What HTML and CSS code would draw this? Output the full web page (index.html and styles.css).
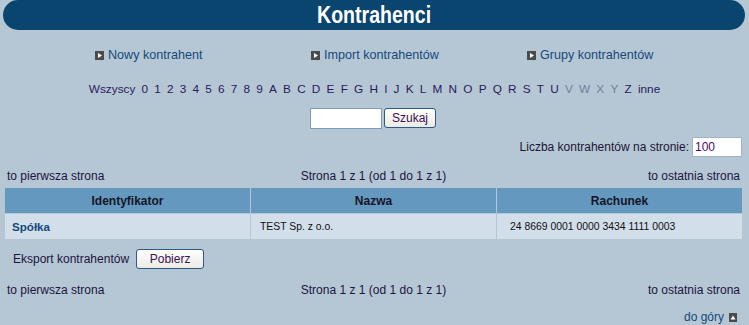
FILE: index.html
```html
<!DOCTYPE html>
<html lang="pl">
<head>
<meta charset="utf-8">
<title>Kontrahenci</title>
<link rel="stylesheet" href="styles.css">
</head>
<body>
<div class="page">
  <h1 class="title"><span class="title-text">Kontrahenci</span></h1>

  <nav class="actions">
    <a class="action" href="#"><svg class="arrow" width="9" height="9" viewBox="0 0 9 9"><rect width="9" height="9" fill="#4b4b4b"/><path d="M3 2 L7 4.5 L3 7 Z" fill="#fff"/></svg>Nowy kontrahent</a>
    <a class="action" href="#"><svg class="arrow" width="9" height="9" viewBox="0 0 9 9"><rect width="9" height="9" fill="#4b4b4b"/><path d="M3 2 L7 4.5 L3 7 Z" fill="#fff"/></svg>Import kontrahentów</a>
    <a class="action" href="#"><svg class="arrow" width="9" height="9" viewBox="0 0 9 9"><rect width="9" height="9" fill="#4b4b4b"/><path d="M3 2 L7 4.5 L3 7 Z" fill="#fff"/></svg>Grupy kontrahentów</a>
  </nav>

  <div class="letters">
    <a href="#">Wszyscy</a><a href="#">0</a><a href="#">1</a><a href="#">2</a><a href="#">3</a><a href="#">4</a><a href="#">5</a><a href="#">6</a><a href="#">7</a><a href="#">8</a><a href="#">9</a><a href="#">A</a><a href="#">B</a><a href="#">C</a><a href="#">D</a><a href="#">E</a><a href="#">F</a><a href="#">G</a><a href="#">H</a><a href="#">I</a><a href="#">J</a><a href="#">K</a><a href="#">L</a><a href="#">M</a><a href="#">N</a><a href="#">O</a><a href="#">P</a><a href="#">Q</a><a href="#">R</a><a href="#">S</a><a href="#">T</a><a href="#">U</a><span class="off">V</span><span class="off">W</span><span class="off">X</span><span class="off">Y</span><a href="#">Z</a><a href="#">inne</a>
  </div>

  <form class="search">
    <input class="search-input" type="text">
    <button class="btn btn-search" type="button">Szukaj</button>
  </form>

  <div class="perpage">
    <label class="perpage-label">Liczba kontrahentów na stronie:</label>
    <input class="perpage-input" type="text" value="100">
  </div>

  <div class="pager">
    <span class="pager-first">to pierwsza strona</span>
    <span class="pager-info">Strona 1 z 1 (od 1 do 1 z 1)</span>
    <span class="pager-last">to ostatnia strona</span>
  </div>

  <table class="grid">
    <thead>
      <tr><th>Identyfikator</th><th>Nazwa</th><th>Rachunek</th></tr>
    </thead>
    <tbody>
      <tr>
        <td class="cell-id"><a href="#">Spółka</a></td>
        <td class="cell-name">TEST Sp. z o.o.</td>
        <td class="cell-acc">24 8669 0001 0000 3434 1111 0003</td>
      </tr>
    </tbody>
  </table>

  <div class="export">
    <span class="export-label">Eksport kontrahentów</span>
    <button class="btn btn-export" type="button">Pobierz</button>
  </div>

  <div class="pager pager-bottom">
    <span class="pager-first">to pierwsza strona</span>
    <span class="pager-info">Strona 1 z 1 (od 1 do 1 z 1)</span>
    <span class="pager-last">to ostatnia strona</span>
  </div>

  <div class="totop">
    <a href="#">do góry</a><svg class="up" width="8" height="9" viewBox="0 0 8 9"><rect width="8" height="9" fill="#4b4b4b"/><path d="M1.5 6.5 L4 2.5 L6.5 6.5 Z" fill="#fff"/></svg>
  </div>
</div>
</body>
</html>
```

FILE: styles.css
```css
html, body {
  margin: 0;
  padding: 0;
  background: #b5c7d5;
}

body {
  font-family: "Liberation Sans", Arial, sans-serif;
  font-size: 12px;
  color: #1e1440;
}

a {
  text-decoration: none;
}

.page {
  width: 749px;
}

.title {
  margin: 0 4px 0 3px;
  height: 30px;
  border-radius: 15px;
  background: #09456e;
  color: #fff;
  font-family: "Liberation Sans", Arial, sans-serif;
  font-weight: bold;
  font-size: 23px;
  line-height: 30px;
  text-align: center;
}

.title-text {
  display: inline-block;
  transform: scaleX(0.85);
}

.actions {
  display: flex;
  margin-top: 18px;
  padding-left: 95px;
  height: 14px;
  line-height: 14px;
}

.action {
  flex: 0 0 216px;
  display: flex;
  align-items: center;
  color: #16497a;
  font-size: 12.6px;
}

.arrow {
  margin-right: 4px;
  flex: none;
}

.letters {
  display: flex;
  justify-content: center;
  gap: 6.2px;
  margin-top: 20px;
  height: 14px;
  line-height: 14px;
  font-size: 11.8px;
}

.letters a {
  color: #2a1a5c;
}

.letters .off {
  color: #6f809c;
}

.search {
  display: flex;
  justify-content: center;
  align-items: flex-start;
  margin: 12px 0 0 0;
  padding-right: 3px;
  height: 21px;
}

.search-input {
  box-sizing: border-box;
  width: 72px;
  height: 21px;
  margin: 0 2px 0 0;
  border: 1px solid #7f9bb5;
  background: #fff;
  padding: 0 3px;
}

.btn {
  box-sizing: border-box;
  height: 20px;
  margin: 0;
  padding: 0;
  border: 1px solid #2e5a86;
  border-radius: 3px;
  background: linear-gradient(#ffffff, #eceae4);
  font-family: "Liberation Sans", Arial, sans-serif;
  font-size: 12px;
  color: #3b0f55;
}

.btn-search {
  width: 52px;
}

.perpage {
  display: flex;
  justify-content: flex-end;
  align-items: center;
  margin-top: 8px;
  padding-right: 7px;
  height: 20px;
}

.perpage-label {
  margin-right: 3px;
  color: #1c1634;
}

.perpage-input {
  box-sizing: border-box;
  width: 50px;
  height: 20px;
  margin: 0;
  border: 1px solid #9fb4c6;
  background: #fff;
  padding: 0 2px;
  font-family: "Liberation Sans", Arial, sans-serif;
  font-size: 12px;
  color: #4a0a6a;
}

.pager {
  display: grid;
  grid-template-columns: 1fr auto 1fr;
  margin: 12px 9px 0 7px;
  height: 14px;
  line-height: 14px;
  color: #20143e;
}

.pager-last {
  text-align: right;
}

.grid {
  margin: 4px 6px 0 4px;
  width: 739px;
  border-collapse: separate;
  border-spacing: 1px;
  table-layout: fixed;
}

.grid th {
  height: 25px;
  padding: 0;
  background: #6498be;
  color: #151528;
  font-size: 12px;
  font-weight: bold;
  text-align: center;
}

.grid td {
  height: 25px;
  padding: 0;
  background: #d3deeb;
  color: #111;
}

.cell-id {
  padding-left: 7px !important;
}

.cell-id a {
  color: #16497a;
  font-weight: bold;
  font-size: 11.6px;
}

.cell-name {
  padding-left: 9px !important;
  font-size: 10.4px;
}

.cell-acc {
  padding-left: 13px !important;
  font-size: 10.4px;
}

.export {
  display: flex;
  align-items: center;
  margin-top: 9px;
  padding-left: 13px;
  height: 20px;
}

.export-label {
  margin-right: 7px;
  color: #1e1440;
}

.btn-export {
  width: 68px;
}

.pager-bottom {
  margin-top: 14px;
}

.totop {
  display: flex;
  justify-content: flex-end;
  align-items: center;
  margin-top: 13px;
  padding-right: 12px;
  height: 14px;
}

.totop a {
  color: #16497a;
}

.up {
  margin-left: 5px;
}
```
